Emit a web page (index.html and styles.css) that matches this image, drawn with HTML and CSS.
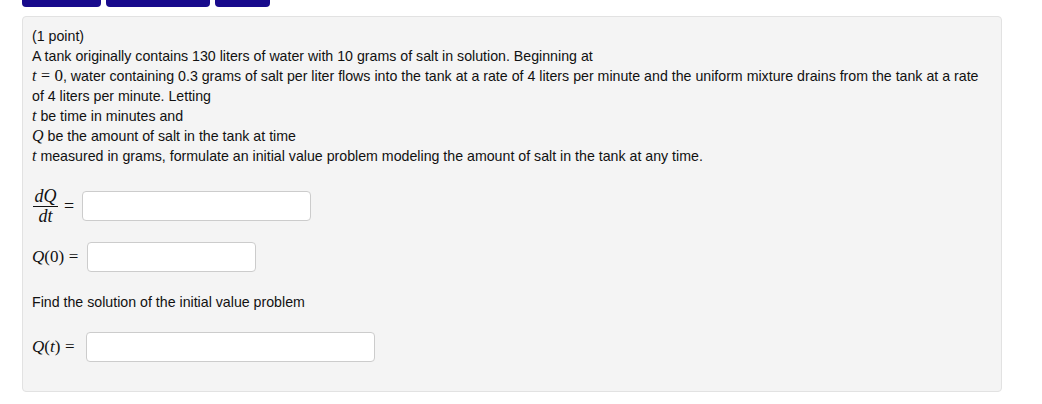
FILE: index.html
```html
<!DOCTYPE html>
<html>
<head>
<meta charset="utf-8">
<link rel="stylesheet" href="styles.css">
</head>
<body>
<div class="page">
  <div class="tabs">
    <div class="tab tab-a"></div>
    <div class="tab tab-b"></div>
    <div class="tab tab-c"></div>
  </div>
  <div class="problem">
    <div class="text">
      (1 point)<br>
      A tank originally contains 130 liters of water with 10 grams of salt in solution. Beginning at<br>
      <span class="m"><i>t</i><span class="rel">=</span><span class="num">0</span></span>, water containing 0.3 grams of salt per liter flows into the tank at a rate of 4 liters per minute and the uniform mixture drains from the tank at a rate<br>
      of 4 liters per minute. Letting<br>
      <span class="m"><i>t</i></span> be time in minutes and<br>
      <span class="m"><i>Q</i></span> be the amount of salt in the tank at time<br>
      <span class="m"><i>t</i></span> measured in grams, formulate an initial value problem modeling the amount of salt in the tank at any time.
    </div>
    <div class="row row-1">
      <span class="frac"><span class="fn"><i>dQ</i></span><span class="fd"><i>dt</i></span></span>
      <span class="eq eq-frac">=</span>
      <span class="input input-1"></span>
    </div>
    <div class="row row-2">
      <span class="math"><i>Q</i>(0)<span class="rel">=</span></span>
      <span class="input input-2"></span>
    </div>
    <div class="text line-find">Find the solution of the initial value problem</div>
    <div class="row row-3">
      <span class="math"><i>Q</i>(<i>t</i>)<span class="rel">=</span></span>
      <span class="input input-3"></span>
    </div>
  </div>
</div>
</body>
</html>
```

FILE: styles.css
```css
html, body {
  margin: 0;
  padding: 0;
  background: #ffffff;
}

.page {
  padding-left: 22px;
  width: 980px;
  font-family: "Liberation Sans", Arial, Helvetica, sans-serif;
  font-size: 14.2px;
  color: #111;
}

.tabs {
  display: flex;
  gap: 5px;
  height: 7px;
}

.tab {
  height: 7px;
  background: #180a8c;
  border-radius: 0 0 4px 4px;
}

.tab-a { width: 79px; }
.tab-b { width: 104px; }
.tab-c { width: 55px; }

.problem {
  margin-top: 9px;
  background: #f4f4f4;
  border: 1px solid #e2e2e2;
  border-radius: 4px;
  padding: 9px 9px 29px 9px;
}

.text {
  line-height: 20px;
  white-space: nowrap;
}

.m {
  font-family: "Liberation Serif", "Times New Roman", serif;
  font-size: 16px;
  line-height: 0;
}

.m .num {
  font-size: 17px;
}

.rel {
  margin: 0 0.28em;
}

.math {
  font-family: "Liberation Serif", "Times New Roman", serif;
  font-size: 17px;
  white-space: nowrap;
}

.row {
  display: flex;
  align-items: center;
}

.row-1 {
  margin-top: 22px;
  height: 36px;
  padding-left: 1px;
}

.row-2 {
  margin-top: 18px;
  height: 30px;
}

.line-find {
  margin-top: 20px;
}

.row-3 {
  margin-top: 20px;
  height: 30px;
}

.frac {
  display: inline-flex;
  flex-direction: column;
  align-items: center;
  font-family: "Liberation Serif", "Times New Roman", serif;
  font-size: 18px;
  line-height: 17px;
  width: 25px;
}

.fn {
  display: block;
  width: 100%;
  text-align: center;
  border-bottom: 1px solid #111;
  padding-bottom: 1px;
}

.fd {
  display: block;
  padding-top: 1px;
}

.eq {
  font-family: "Liberation Serif", "Times New Roman", serif;
  font-size: 18px;
}

.eq-frac {
  margin-left: 6px;
}

.input {
  display: block;
  height: 28px;
  background: #fff;
  border: 1px solid #cccccc;
  border-radius: 4px;
  box-sizing: content-box;
}

.input-1 {
  width: 227px;
  margin-left: 8px;
}

.input-2 {
  width: 167px;
  margin-left: 4px;
}

.input-3 {
  width: 287px;
  margin-left: 7px;
}
```
